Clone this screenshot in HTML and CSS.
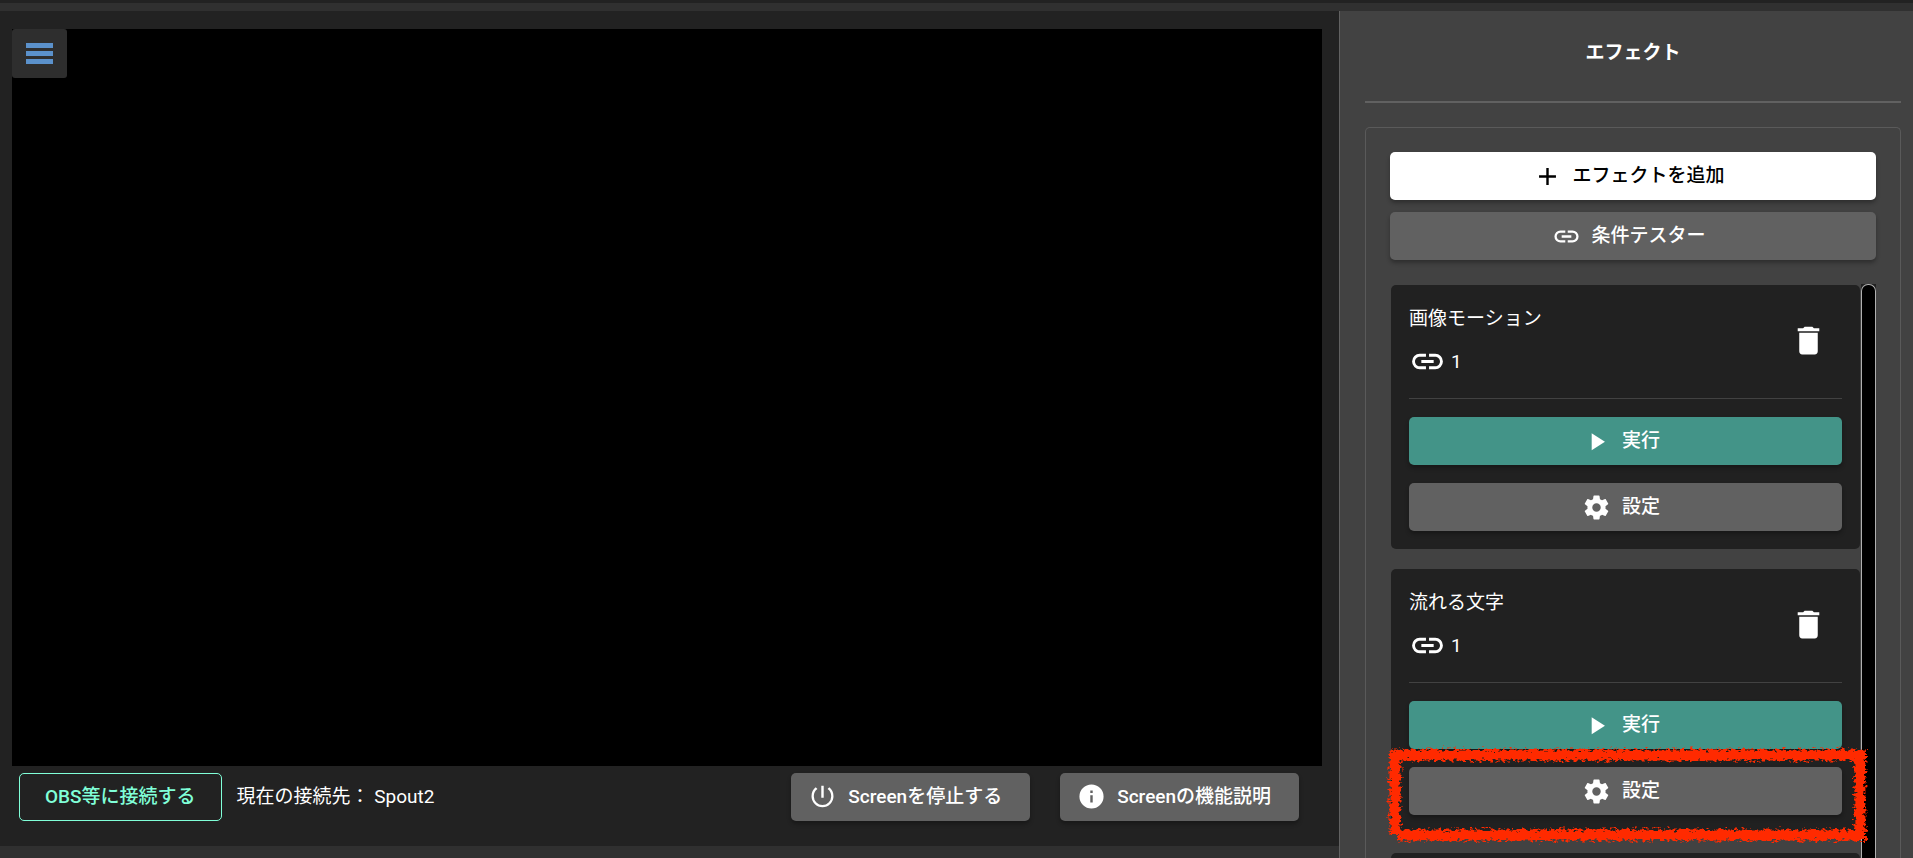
FILE: index.html
```html
<!DOCTYPE html>
<html lang="ja">
<head>
<meta charset="utf-8">
<title>エフェクト</title>
<link rel="stylesheet" href="styles.css">
</head>
<body>
<svg class="defs" aria-hidden="true">
  <symbol id="i-link" viewBox="0 0 24 24"><path d="M3.9,12C3.9,10.29 5.29,8.9 7,8.9H11V7H7A5,5 0 0,0 2,12A5,5 0 0,0 7,17H11V15.1H7C5.29,15.1 3.9,13.71 3.9,12M8,13H16V11H8V13M17,7H13V8.9H17C18.71,8.9 20.1,10.29 20.1,12C20.1,13.71 18.71,15.1 17,15.1H13V17H17A5,5 0 0,0 22,12A5,5 0 0,0 17,7Z"/></symbol>
  <symbol id="i-plus" viewBox="0 0 24 24"><path d="M19,13H13V19H11V13H5V11H11V5H13V11H19V13Z"/></symbol>
  <symbol id="i-play" viewBox="0 0 24 24"><path d="M8,5.14V19.14L19,12.14L8,5.14Z"/></symbol>
  <symbol id="i-cog" viewBox="0 0 24 24"><path d="M12,15.5A3.5,3.5 0 0,1 8.5,12A3.5,3.5 0 0,1 12,8.5A3.5,3.5 0 0,1 15.5,12A3.5,3.5 0 0,1 12,15.5M19.43,12.97C19.47,12.65 19.5,12.33 19.5,12C19.5,11.67 19.47,11.34 19.43,11L21.54,9.37C21.73,9.22 21.78,8.95 21.66,8.73L19.66,5.27C19.54,5.05 19.27,4.96 19.05,5.05L16.56,6.05C16.04,5.66 15.5,5.32 14.87,5.07L14.5,2.42C14.46,2.18 14.25,2 14,2H10C9.75,2 9.54,2.18 9.5,2.42L9.13,5.07C8.5,5.32 7.96,5.66 7.44,6.05L4.95,5.05C4.73,4.96 4.46,5.05 4.34,5.27L2.34,8.73C2.21,8.95 2.27,9.22 2.46,9.37L4.57,11C4.53,11.34 4.5,11.67 4.5,12C4.5,12.33 4.53,12.65 4.57,12.97L2.46,14.63C2.27,14.78 2.21,15.05 2.34,15.27L4.34,18.73C4.46,18.95 4.73,19.03 4.95,18.95L7.44,17.94C7.96,18.34 8.5,18.68 9.13,18.93L9.5,21.58C9.54,21.82 9.75,22 10,22H14C14.25,22 14.46,21.82 14.5,21.58L14.87,18.93C15.5,18.67 16.04,18.34 16.56,17.94L19.05,18.95C19.27,19.03 19.54,18.95 19.66,18.73L21.66,15.27C21.78,15.05 21.73,14.78 21.54,14.63L19.43,12.97Z"/></symbol>
  <symbol id="i-delete" viewBox="0 0 24 24"><path d="M19,4H15.5L14.5,3H9.5L8.5,4H5V6H19M6,19A2,2 0 0,0 8,21H16A2,2 0 0,0 18,19V7H6V19Z"/></symbol>
  <symbol id="i-power" viewBox="0 0 24 24"><path d="M17.6,4.4L16.2,5.8C18.1,7.1 19.2,9.3 19.2,11.8A7.2,7.2 0 0,1 12,19A7.2,7.2 0 0,1 4.8,11.8C4.8,9.3 5.9,7.1 7.8,5.8L6.4,4.4C4.2,6 2.9,8.7 2.9,11.8A9.1,9.1 0 0,0 12,20.9A9.1,9.1 0 0,0 21.1,11.8C21.1,8.7 19.8,6 17.6,4.4M13,3H11V13H13"/></symbol>
  <symbol id="i-info" viewBox="0 0 24 24"><path d="M13,9H11V7H13M13,17H11V11H13M12,2A10,10 0 0,0 2,12A10,10 0 0,0 12,22A10,10 0 0,0 22,12A10,10 0 0,0 12,2Z"/></symbol>
  <symbol id="i-menu" viewBox="0 0 27 21"><path d="M0,0H27V5H0ZM0,8H27V13H0ZM0,16H27V21H0Z"/></symbol>
  <filter id="crayon" filterUnits="userSpaceOnUse" x="0" y="0" width="490" height="110">
    <feTurbulence type="fractalNoise" baseFrequency="0.25 0.4" numOctaves="3" seed="4" result="n"/>
    <feDisplacementMap in="SourceGraphic" in2="n" scale="10" xChannelSelector="R" yChannelSelector="G"/>
  </filter>
</svg>

<div class="app">
  <div class="topbar"></div>
  <main class="stage">
    <div class="screen">
      <button class="menu" type="button" aria-label="メニュー"><svg><use href="#i-menu"/></svg></button>
    </div>
    <div class="controls">
      <button class="btn outline" type="button">OBS等に接続する</button>
      <p class="target">現在の接続先： Spout2</p>
      <div class="actions">
        <button class="btn grey" type="button"><svg class="icon"><use href="#i-power"/></svg>Screenを停止する</button>
        <button class="btn grey" type="button"><svg class="icon"><use href="#i-info"/></svg>Screenの機能説明</button>
      </div>
    </div>
  </main>

  <aside class="side">
    <h1 class="title">エフェクト</h1>
    <section class="panel">
      <button class="btn white" type="button"><svg class="icon"><use href="#i-plus"/></svg>エフェクトを追加</button>
      <button class="btn grey" type="button"><svg class="icon"><use href="#i-link"/></svg>条件テスター</button>
      <div class="scroller">
        <div class="list">
          <article class="card">
            <header class="head">
              <div>
                <h2 class="name">画像モーション</h2>
                <p class="links"><svg class="icon-lg"><use href="#i-link"/></svg>1</p>
              </div>
              <button class="delete" type="button" aria-label="削除"><svg class="icon-lg"><use href="#i-delete"/></svg></button>
            </header>
            <button class="btn teal" type="button"><svg class="icon"><use href="#i-play"/></svg>実行</button>
            <button class="btn grey" type="button"><svg class="icon"><use href="#i-cog"/></svg>設定</button>
          </article>
          <article class="card">
            <header class="head">
              <div>
                <h2 class="name">流れる文字</h2>
                <p class="links"><svg class="icon-lg"><use href="#i-link"/></svg>1</p>
              </div>
              <button class="delete" type="button" aria-label="削除"><svg class="icon-lg"><use href="#i-delete"/></svg></button>
            </header>
            <button class="btn teal" type="button"><svg class="icon"><use href="#i-play"/></svg>実行</button>
            <button class="btn grey" type="button"><svg class="icon"><use href="#i-cog"/></svg>設定</button>
            <svg class="mark" viewBox="0 0 490 110" preserveAspectRatio="none" aria-hidden="true">
              <g filter="url(#crayon)"><path d="M8,11H484M13,6V90M478,6V97M16,91H484"/></g>
            </svg>
          </article>
          <article class="card">
            <header class="head"></header>
          </article>
        </div>
        <div class="scrollbar"><div class="thumb"></div></div>
      </div>
    </section>
  </aside>
</div>
</body>
</html>
```
FILE: styles.css
```css
* { box-sizing: border-box; }
body {
  margin: 0;
  background: #303030;
  color: #fff;
  font: 400 19px/28px Roboto, "Noto Sans CJK JP", sans-serif;
}
h1, h2, p { margin: 0; }
button { font: inherit; color: inherit; cursor: pointer; }
svg { display: block; fill: currentColor; }
.defs { position: absolute; width: 0; height: 0; }

.app {
  display: grid;
  grid-template-columns: 7fr 3fr;
  grid-template-rows: auto 1fr;
  height: 100vh;
  overflow: hidden;
}
.topbar {
  grid-column: 1 / -1;
  height: 11px;
  border-top: 3px solid #222;
  background: #303030;
}

.stage {
  align-self: start;
  padding: 18px 17px 25px 12px;
  background: #222;
}
.screen { aspect-ratio: 16 / 9; background: #000; }
.menu {
  display: grid;
  place-items: center;
  width: 55px;
  height: 49px;
  padding: 0;
  border: 0;
  border-radius: 3px;
  background: #2e2e2e;
  color: #5b91cb;
}
.menu svg { width: 27px; height: 21px; }
.controls {
  display: flex;
  align-items: center;
  gap: 15px;
  padding: 7px 23px 0 7px;
}
.actions { display: flex; gap: 30px; margin-left: auto; }

.btn {
  display: flex;
  align-items: center;
  justify-content: center;
  height: 48px;
  padding: 0 24px;
  border: 0;
  border-radius: 5px;
  font-weight: 500;
  white-space: nowrap;
  box-shadow: 0 3px 4px rgba(0, 0, 0, .3);
}
.actions .btn { padding: 0 28px 0 26px; }
.icon { width: 29px; height: 29px; margin: 0 11px 0 -9px; }
.icon-lg { width: 37px; height: 37px; }
.grey { background: #616161; }
.white { background: #fff; color: #000; }
.teal { background: #439488; }
.outline {
  padding: 0 25px;
  border: 1px solid #80ffd8;
  background: transparent;
  color: #80ffd8;
  box-shadow: none;
}

.side {
  display: flex;
  flex-direction: column;
  min-height: 0;
  padding: 0 12px 0 25px;
  border-left: 1px solid #616161;
  background: #424242;
}
.title {
  flex: none;
  margin-bottom: 24px;
  padding: 28px 0 34px;
  border-bottom: 2px solid #616161;
  font-size: 19px;
  font-weight: 700;
  line-height: 28px;
  text-align: center;
}
.panel {
  display: flex;
  flex: 1;
  flex-direction: column;
  gap: 12px;
  min-height: 0;
  padding: 24px 24px 0;
  border: 1px solid #5a5a5a;
  border-bottom: 0;
  border-radius: 5px 5px 0 0;
}
.panel > .btn { flex: none; }
.scroller {
  display: flex;
  flex: 1;
  min-height: 0;
  margin-top: 12px;
}
.list {
  display: flex;
  flex: 1;
  flex-direction: column;
  gap: 20px;
  padding: 1px 1px 0;
}
.card {
  position: relative;
  display: flex;
  flex: none;
  flex-direction: column;
  gap: 18px;
  padding: 18px;
  border-radius: 5px;
  background: #212121;
}
.head {
  display: flex;
  justify-content: space-between;
  align-items: flex-start;
  height: 96px;
  border-bottom: 1px solid #424242;
}
.name {
  padding-top: 2px;
  font-size: 19px;
  font-weight: 400;
  line-height: 28px;
}
.links { display: flex; align-items: center; gap: 5px; padding-top: 10px; }
.delete {
  margin: 19px 15px 0 0;
  padding: 0;
  border: 0;
  background: none;
}
.mark {
  position: absolute;
  right: -12px;
  bottom: -21px;
  left: -9px;
  z-index: 1;
  width: calc(100% + 21px);
  height: 110px;
  fill: none;
  stroke: #ff2a00;
  stroke-width: 11px;
  pointer-events: none;
}
.scrollbar { width: 15px; background: #212121; }
.thumb {
  height: 100%;
  border: 1px solid #b0b0b0;
  border-bottom: 0;
  border-radius: 7px 7px 0 0;
  background: #000;
}
```
